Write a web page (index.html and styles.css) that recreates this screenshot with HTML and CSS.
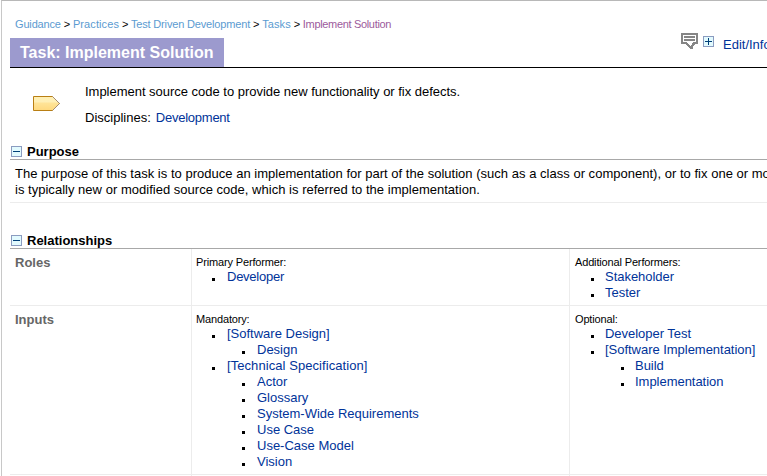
FILE: index.html
```
<!DOCTYPE html>
<html lang="en">
<head>
<meta charset="utf-8">
<title>Task: Implement Solution</title>
<link rel="stylesheet" href="styles.css">
</head>
<body>
<main class="page">
  <nav class="crumbs"><a>Guidance</a> &gt; <a class="wide">Practices</a> &gt; <a>Test Driven Development</a> &gt; <a class="wide">Tasks</a> &gt; <a class="current">Implement Solution</a></nav>
  <header class="head">
    <h1>Task: Implement Solution</h1>
    <div class="tools">
      <svg class="note" width="17" height="16" viewBox="0 0 17 16" shape-rendering="crispEdges"><path fill="#858585" fill-rule="evenodd" d="M0 0H17V11H14V12H13V13H12V16H9V15H8V14H7V13H6V12H5V11H0ZM2 2V9H6V10H7V11H8V12H9V13H10V12H11V10H12V9H15V2Z"/><path fill="#858585" d="M3 3H14V5H3ZM3 6H14V8H3Z"/></svg>
      <svg class="plus" width="11" height="11" shape-rendering="crispEdges"><path fill="#8b9cc0" d="M0 0H11V11H0Z"/><path fill="#e2fafe" d="M1 1H10V10H1Z"/><path fill="#003f78" d="M2 5H9V6H2ZM5 2H6V9H5Z"/></svg>
      <a>Edit/Info</a>
    </div>
  </header>
  <section class="intro">
    <svg width="28" height="17" viewBox="0 0 28 17"><defs><linearGradient id="g" x2="0" y2="1"><stop offset="0" stop-color="#ffefb0"/><stop offset=".35" stop-color="#fff0b8"/><stop offset=".5" stop-color="#ffe396"/><stop offset="1" stop-color="#ffd97e"/></linearGradient></defs><path d="M.5 1.5H19.5L26.5 8.5L19.5 15.5H.5Z" fill="url(#g)" stroke="#b97f14"/><path d="M19.5 1.5L26.5 8.5L19.5 15.5" fill="none" stroke="#a48b73"/></svg>
    <div>
      <p class="summary">Implement source code to provide new functionality or fix defects.</p>
      <p class="disc">Disciplines: <a class="tight">Development</a></p>
    </div>
  </section>
  <section>
    <h2><svg width="11" height="11" shape-rendering="crispEdges"><path fill="#8b9cc0" d="M0 0H11V11H0Z"/><path fill="#e2fafe" d="M1 1H10V10H1Z"/><path fill="#003f78" d="M2 5H9V6H2Z"/></svg><span>Purpose</span></h2>
    <div class="purpose">
      <p>The purpose of this task is to produce an implementation for part of the solution (such as a class or component), or to fix one or more</p>
      <p>is typically new or modified source code, which is referred to the implementation.</p>
    </div>
  </section>
  <section class="relations">
    <h2><svg width="11" height="11" shape-rendering="crispEdges"><path fill="#8b9cc0" d="M0 0H11V11H0Z"/><path fill="#e2fafe" d="M1 1H10V10H1Z"/><path fill="#003f78" d="M2 5H9V6H2Z"/></svg><span>Relationships</span></h2>
    <div class="row roles">
      <h3>Roles</h3>
      <div class="cell"><h4>Primary Performer:</h4><ul><li><a class="tight">Developer</a></li></ul></div>
      <div class="cell"><h4>Additional Performers:</h4><ul><li><a>Stakeholder</a></li><li><a>Tester</a></li></ul></div>
    </div>
    <div class="row inputs">
      <h3>Inputs</h3>
      <div class="cell"><h4>Mandatory:</h4>
        <ul>
          <li><a>[Software Design]</a><ul><li><a>Design</a></li></ul></li>
          <li><a class="loose">[Technical Specification]</a><ul><li><a>Actor</a></li><li><a>Glossary</a></li><li><a>System-Wide Requirements</a></li><li><a>Use Case</a></li><li><a>Use-Case Model</a></li><li><a>Vision</a></li></ul></li>
        </ul>
      </div>
      <div class="cell"><h4>Optional:</h4>
        <ul>
          <li><a>Developer Test</a></li>
          <li><a>[Software Implementation]</a><ul><li><a>Build</a></li><li><a>Implementation</a></li></ul></li>
        </ul>
      </div>
    </div>
    <div class="row rest"><h3></h3><div class="cell"></div><div class="cell"></div></div>
  </section>
</main>
</body>
</html>
```
FILE: styles.css
```
* { box-sizing: border-box; margin: 0; padding: 0; }
html, body { overflow: hidden; }
body {
  height: 476px;
  padding-left: 1px;
  background: #fff;
  color: #000;
  font: 13px/16px "Liberation Sans", Arial, sans-serif;
  white-space: nowrap;
}
svg { display: block; flex: none; }
a { color: #039; }
.tight { letter-spacing: -0.25px; }
.loose { letter-spacing: 0.07px; }
.page {
  height: 476px;
  border-top: 1px solid #b8b8b8;
  border-left: 1px solid #c8c8c8;
  padding-left: 8px;
  overflow: hidden;
}
.crumbs {
  height: 37px;
  padding: 16px 0 0 5px;
  font-size: 11px;
  line-height: 14px;
  letter-spacing: -0.16px;
}
.crumbs a { color: #5b9bd1; }
.crumbs .wide { letter-spacing: 0.1px; }
.crumbs .current { color: #9c5b9c; letter-spacing: -0.33px; }
.head { display: flex; height: 30px; border-bottom: 1px solid #000; }
h1 {
  flex: none;
  width: 214px;
  height: 29px;
  padding-left: 10px;
  background: #9c9ace;
  color: #fff;
  font-size: 16px;
  line-height: 29px;
}
.tools { display: flex; flex: none; margin: -5px 0 0 457px; }
.tools .plus { margin: 3px 9px 0 5px; }
.tools a { margin-top: 4px; }
.intro { display: flex; height: 75px; padding: 16px 0 0 23px; }
.intro svg { margin: 11px 24px 0 0; }
.summary { letter-spacing: -0.02px; }
.disc { margin-top: 10px; word-spacing: 1.5px; }
h2 {
  display: flex;
  height: 17px;
  padding-left: 1px;
  border-bottom: 1px solid #a8a8a8;
  font-size: 13px;
  line-height: 18px;
}
h2 svg { margin: 3px 5px 0 0; }
.purpose {
  height: 43px;
  padding: 6px 0 0 5px;
  border-bottom: 1px solid #ececec;
  letter-spacing: 0.02px;
}
.relations { padding-top: 29px; }
.row {
  display: grid;
  grid-template-columns: 181px 378px 1fr;
  border-bottom: 1px solid #ececec;
}
.roles { height: 57px; }
.inputs { height: 169px; }
.rest { height: 20px; }
h3 { padding: 6px 0 0 5px; color: #666; font-size: 13px; line-height: 16px; }
.cell { padding: 6px 0 0 4px; border-left: 1px solid #ececec; }
.cell > ul { padding-left: 1px; }
.cell + .cell { padding-left: 5px; }
.cell + .cell > ul { padding-left: 0; letter-spacing: -0.03px; }
h4 { font-size: 11px; font-weight: normal; line-height: 14px; letter-spacing: -0.15px; }
ul { list-style: none; }
li { padding-left: 30px; }
li::before {
  content: "";
  float: left;
  width: 3px;
  height: 3px;
  margin: 9px 0 0 -15px;
  background: #000;
}
.cell + .cell li::before { margin-left: -14px; }
```
